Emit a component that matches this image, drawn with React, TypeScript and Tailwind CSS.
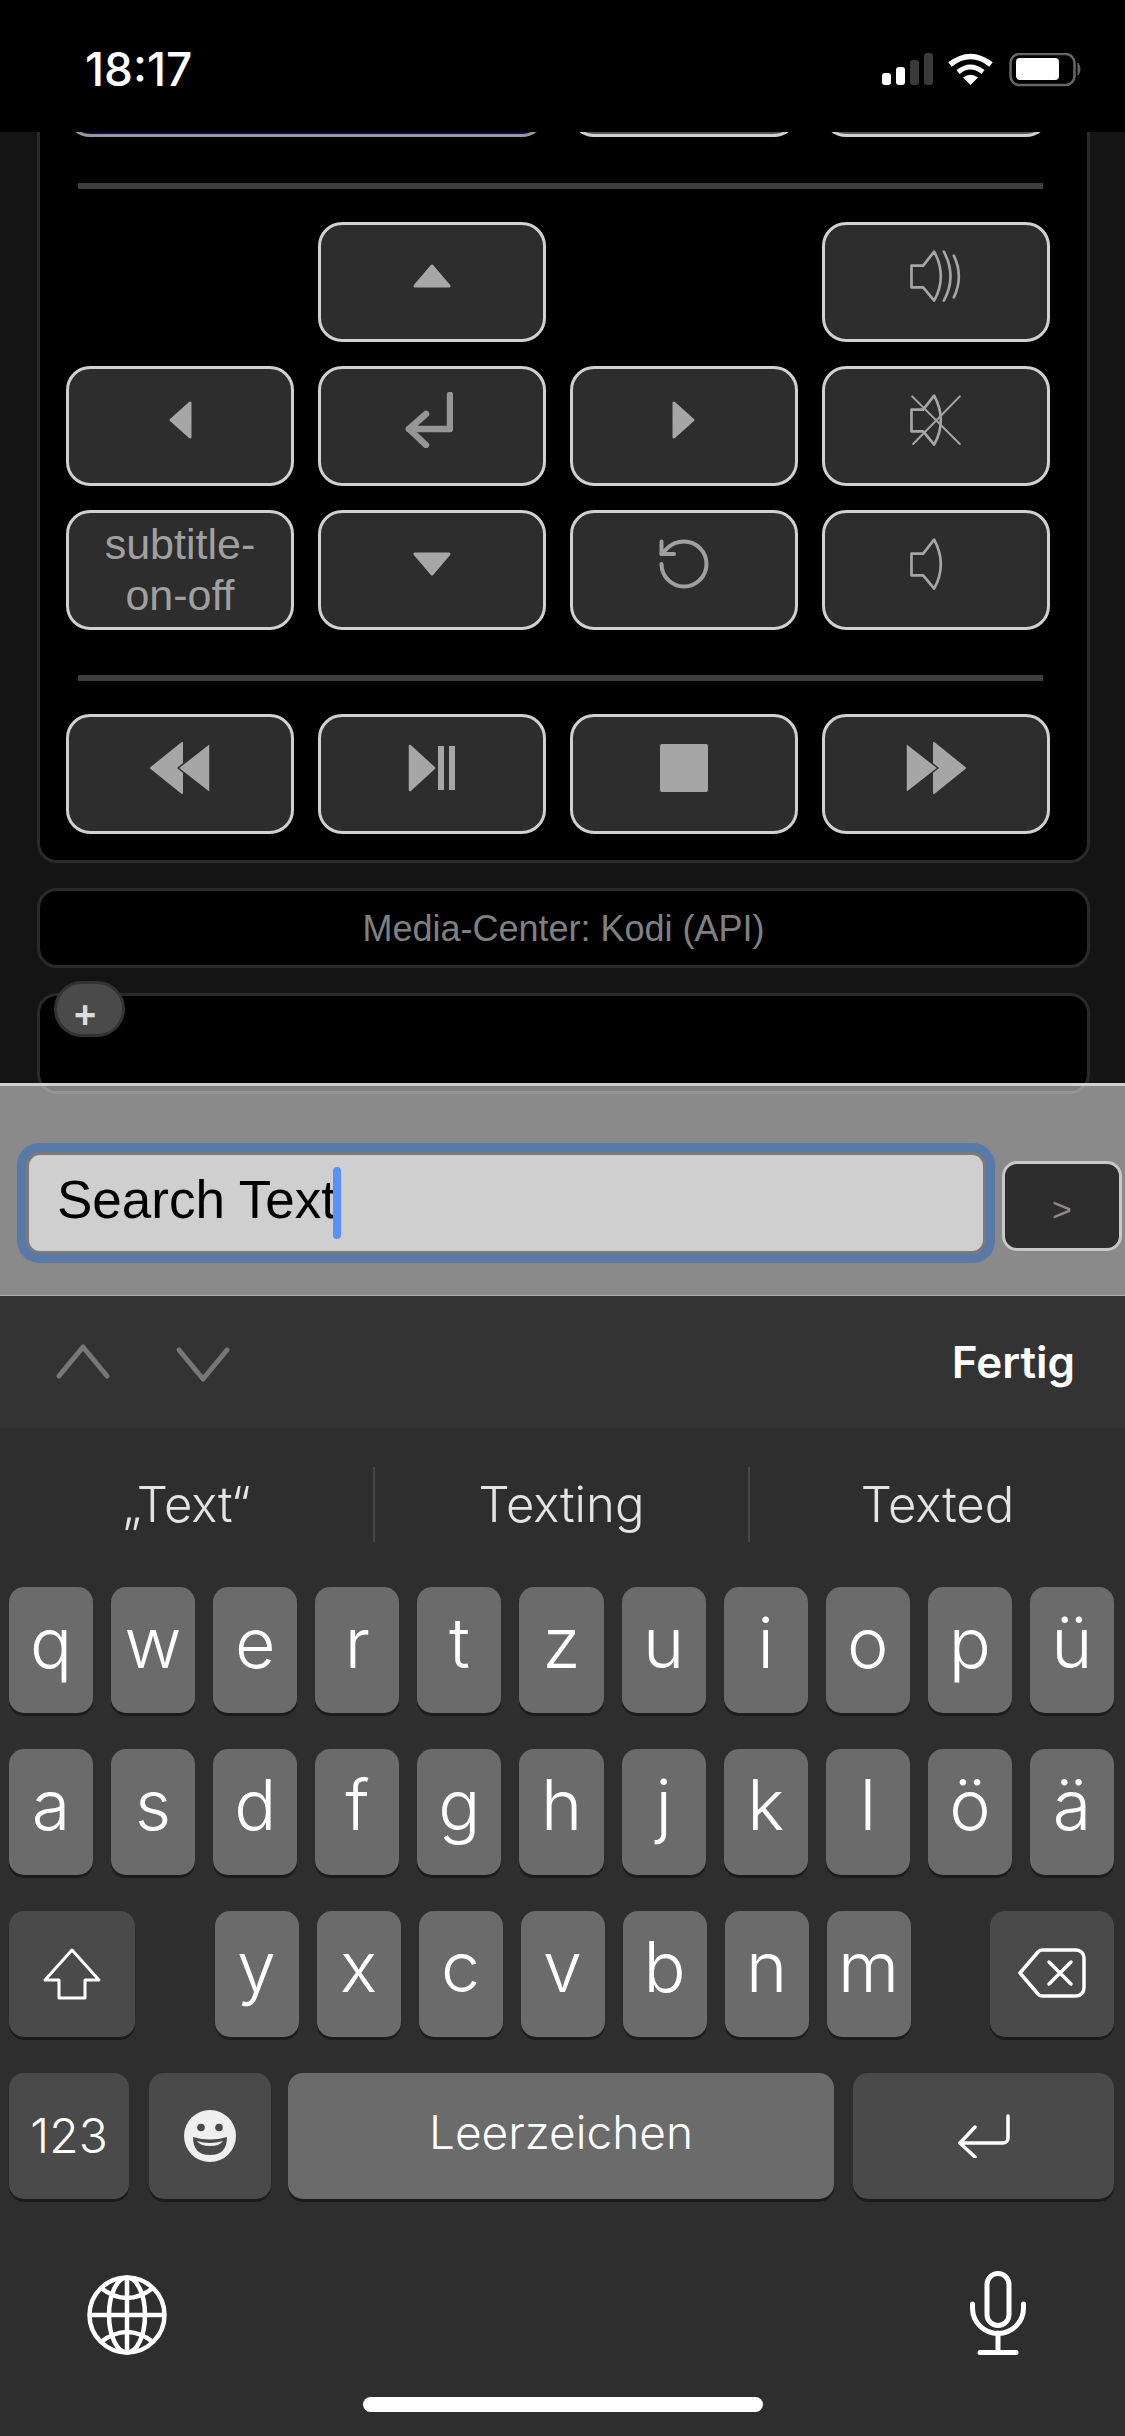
import React from 'react';
import { RotateCcw } from 'lucide-react';

const Tri = ({ w, h, points, className }: { w: number; h: number; points: string; className?: string }) => (
  <svg width={w} height={h} viewBox={`0 0 ${w} ${h}`} className={className}>
    <polygon points={points} fill="#a6a6a6" stroke="#a6a6a6" strokeWidth="3" strokeLinejoin="round" />
  </svg>
);

const Speaker = ({ waves, muted }: { waves?: boolean; muted?: boolean }) => (
  <svg width="57" height="55" viewBox="0 0 170 165" fill="none" stroke="#a6a6a6" strokeWidth="8" strokeLinejoin="round" strokeLinecap="round">
    <path d="M10 50 H45 L78 8 Q118 82 78 155 L45 115 H10 Z" />
    {waves && <path d="M107 8 Q147 82 107 155" />}
    {waves && <path d="M137 20 Q167 82 137 145" />}
    {muted && <path d="M12 10 L155 153 M155 10 L15 153" strokeWidth="6" />}
  </svg>
);

const RemoteButton = ({ children, flat }: { children?: React.ReactNode; flat?: boolean }) => (
  <div className={`h-[120px] rounded-[24px] border-[3px] border-[#d0d0d0] bg-[#2d2d2d] flex items-center justify-center ${flat ? '' : 'pb-[12px]'}`}>
    {children}
  </div>
);

const Divider = () => <div className="h-[6px] ml-[38px] w-[965px] bg-[#3f3f3f]" />;

const Key = ({ label, className }: { label: string; className?: string }) => (
  <div className={`h-[126px] rounded-[15px] bg-[#6b6b6b] shadow-[0_3px_0_#1c1c1c] flex items-center justify-center pb-[15px] text-[70px] font-light text-white ${className ?? ''}`}>
    {label}
  </div>
);

const DarkKey = ({ children, className }: { children: React.ReactNode; className: string }) => (
  <div className={`h-[126px] rounded-[15px] bg-[#4a4a4a] shadow-[0_3px_0_#1c1c1c] flex items-center justify-center text-white ${className}`}>
    {children}
  </div>
);

const StatusIcons = () => (
  <svg width="200" height="34" viewBox="0 0 200 34" fill="none">
    <rect x="0" y="20" width="9" height="12" rx="3" fill="#fff" />
    <rect x="14" y="14" width="9" height="18" rx="3" fill="#fff" />
    <rect x="28" y="7" width="9" height="25" rx="3" fill="#3a3a3a" />
    <rect x="42" y="0" width="9" height="32" rx="3" fill="#3a3a3a" />
    <path d="M68 11.5 Q88.5 -4.5 109 11.5" stroke="#fff" strokeWidth="5.5" />
    <path d="M76 19 Q88.5 9 101 19" stroke="#fff" strokeWidth="5" />
    <path d="M88.5 32 L81 24.5 Q88.5 19 96 24.5 Z" fill="#fff" />
    <rect x="128.5" y="1" width="64" height="31" rx="9" stroke="#666" strokeWidth="2.5" />
    <rect x="134" y="5" width="43" height="22" rx="4" fill="#fff" />
    <path d="M196 10 Q200 16.5 196 22 Z" fill="#666" stroke="#666" strokeWidth="1" />
  </svg>
);

const row1 = 'q w e r t z u i o p ü'.split(' ');
const row2 = 'a s d f g h j k l ö ä'.split(' ');
const row3 = 'y x c v b n m'.split(' ');

export default function App() {
  return (
    <div className="w-[1125px] h-[2436px] overflow-hidden bg-black flex flex-col font-['Inter',sans-serif]">
      {/* status bar */}
      <div className="h-[132px] shrink-0 bg-black flex justify-between pl-[85px] pr-[43px]">
        <span className="mt-[42px] h-[54px] leading-[54px] text-[46px] font-medium text-white">18:17</span>
        <div className="mt-[53px]">
          <StatusIcons />
        </div>
      </div>

      {/* web page */}
      <div className="relative h-[1164px] shrink-0 overflow-hidden bg-[#141414] pl-[37px] pr-[35px] font-['Liberation_Sans',sans-serif]">
        <div className="-mt-[140px] rounded-[20px] border-[3px] border-[#2a2a2a] bg-black pt-[22px] pb-[26px]">
          <div className="grid grid-cols-4 gap-x-[24px] w-[984px] ml-[26px]">
            <div className="col-span-2 h-[120px] rounded-[24px] border-[3px] border-[#999] bg-[#0a0a3c]" />
            <div className="h-[120px] rounded-[24px] border-[3px] border-[#d0d0d0] bg-[#555]" />
            <div className="h-[120px] rounded-[24px] border-[3px] border-[#d0d0d0] bg-[#555]" />
          </div>
          <div className="mt-[46px] mb-[33px]">
            <Divider />
          </div>
          <div className="grid grid-cols-4 gap-x-[24px] gap-y-[24px] w-[984px] ml-[26px]">
            <div />
            <RemoteButton>
              <Tri w={38} h={24} points="19,2 36,22 2,22" />
            </RemoteButton>
            <div />
            <RemoteButton>
              <Speaker waves />
            </RemoteButton>

            <RemoteButton>
              <Tri w={24} h={38} points="22,2 22,36 3,19" />
            </RemoteButton>
            <RemoteButton>
              <svg width="48" height="56" viewBox="0 0 48 56" fill="none" stroke="#969696" strokeWidth="6.5" strokeLinecap="round" strokeLinejoin="round" className="-ml-[6px]">
                <path d="M45 3 V37 H4" />
                <path d="M21 22 L4 37 L21 53" />
              </svg>
            </RemoteButton>
            <RemoteButton>
              <Tri w={24} h={38} points="2,2 2,36 21,19" />
            </RemoteButton>
            <RemoteButton>
              <Speaker muted />
            </RemoteButton>

            <RemoteButton flat>
              <span className="text-center text-[43px] leading-[51px] text-[#a0a0a0]">
                subtitle-
                <br />
                on-off
              </span>
            </RemoteButton>
            <RemoteButton>
              <Tri w={38} h={24} points="2,2 36,2 19,22" />
            </RemoteButton>
            <RemoteButton>
              <RotateCcw className="w-[60px] h-[60px] text-[#a0a0a0]" strokeWidth={1.6} />
            </RemoteButton>
            <RemoteButton>
              <Speaker />
            </RemoteButton>
          </div>
          <div className="mt-[45px] mb-[33px]">
            <Divider />
          </div>
          <div className="grid grid-cols-4 gap-x-[24px] w-[984px] ml-[26px]">
            <RemoteButton>
              <svg width="62" height="54" viewBox="0 0 62 54" fill="#a6a6a6" stroke="#a6a6a6" strokeWidth="2" strokeLinejoin="round">
                <polygon points="2,27 33,2 33,52" />
                <polygon points="29,27 61,2 61,52" stroke="#2a2a2a" strokeWidth="1.5" />
              </svg>
            </RemoteButton>
            <RemoteButton>
              <svg width="48" height="48" viewBox="0 0 48 48" fill="#a6a6a6">
                <polygon points="2,2 26,24 2,46" stroke="#a6a6a6" strokeWidth="2.5" strokeLinejoin="round" />
                <rect x="30" y="2" width="6" height="44" />
                <rect x="41" y="2" width="6" height="44" />
              </svg>
            </RemoteButton>
            <RemoteButton>
              <div className="w-[48px] h-[48px] rounded-[2px] bg-[#a6a6a6]" />
            </RemoteButton>
            <RemoteButton>
              <svg width="62" height="54" viewBox="0 0 62 54" fill="#a6a6a6" stroke="#a6a6a6" strokeWidth="2" strokeLinejoin="round">
                <polygon points="60,27 29,2 29,52" />
                <polygon points="33,27 1,2 1,52" stroke="#2a2a2a" strokeWidth="1.5" />
              </svg>
            </RemoteButton>
          </div>
        </div>

        <div className="mt-[25px] h-[80px] rounded-[20px] border-[3px] border-[#2a2a2a] bg-black flex items-center justify-center pt-[2px] text-[36px] text-[#808080]">
          Media-Center: Kodi (API)
        </div>

        <div className="relative mt-[25px] h-[101px] rounded-[20px] border-[3px] border-[#2a2a2a] bg-black">
          <div className="absolute left-[14px] -top-[15px] w-[71px] h-[56px] rounded-full border-[3px] border-[#333] bg-[#4a4a4a] flex items-center justify-center pt-[11px] pr-[9px] text-[38px] font-bold leading-none text-[#dcdcdc]">
            +
          </div>
        </div>

        {/* search bar floating above the keyboard */}
        <div className="absolute left-0 right-0 bottom-0 h-[213px] border-t-[3px] border-b border-t-[#cfcfcf] border-b-[#b0b0b0] bg-white/50 flex pt-[57px] pl-[17px]">
          <div className="w-[978px] h-[120px] rounded-[22px] bg-[#597aa8] p-[9px]">
            <div className="h-[102px] rounded-[14px] border-[3px] border-[#7a7a7a] bg-[#cfcfcf] flex items-center pl-[28px] text-[53px] text-black">
              <span className="pb-[6px]">Search Text</span>
              <div className="w-[8px] h-[72px] rounded-full bg-[#5b8ffa] -ml-[3px]" />
            </div>
          </div>
          <div className="w-[120px] h-[90px] ml-[7px] mt-[18px] rounded-[15px] border-[3px] border-[#c8c8c8] bg-[#2d2d2d] flex items-center justify-center pt-[6px] text-[34px] text-[#8a8a8a]">
            &gt;
          </div>
        </div>
      </div>

      {/* keyboard toolbar */}
      <div className="h-[132px] shrink-0 bg-[#333333] flex items-center pl-[51px] pr-[50px]">
        <svg width="64" height="38" viewBox="0 0 64 38" fill="none" stroke="#777" strokeWidth="5" strokeLinecap="round" strokeLinejoin="round">
          <path d="M8 33 L32 4 L56 33" />
        </svg>
        <svg width="64" height="38" viewBox="0 0 64 38" fill="none" stroke="#777" strokeWidth="5" strokeLinecap="round" strokeLinejoin="round" className="ml-[56px] mt-[3px]">
          <path d="M8 5 L32 34 L56 5" />
        </svg>
        <span className="ml-auto text-[44px] font-semibold text-white">Fertig</span>
      </div>

      {/* keyboard */}
      <div className="flex-1 bg-[#2e2e2e]">
        <div className="flex h-[75px] mt-[39px] text-[49px] font-light text-[#e4e4e4]">
          <div className="w-[373px] flex items-center justify-center">„Text“</div>
          <div className="w-[375px] border-l-2 border-[#484848] flex items-center justify-center">Texting</div>
          <div className="flex-1 border-l-2 border-[#484848] flex items-center justify-center">Texted</div>
        </div>

        <div className="mt-[45px] pl-[9px] pr-[11px] flex flex-col gap-[36px]">
          <div className="flex gap-[18px]">
            {row1.map(k => (
              <Key key={k} label={k} className="flex-1" />
            ))}
          </div>
          <div className="flex gap-[18px]">
            {row2.map(k => (
              <Key key={k} label={k} className="flex-1" />
            ))}
          </div>
          <div className="flex justify-between">
            <DarkKey className="w-[126px]">
              <svg width="60" height="54" viewBox="0 0 60 54" fill="none" stroke="#fff" strokeWidth="3" strokeLinejoin="round">
                <path d="M30 3 L57 33 H43 V51 H17 V33 H3 Z" />
              </svg>
            </DarkKey>
            <div className="flex gap-[18px]">
              {row3.map(k => (
                <Key key={k} label={k} className="w-[84px]" />
              ))}
            </div>
            <DarkKey className="w-[124px] pb-[2px]">
              <svg width="68" height="50" viewBox="0 0 68 50" fill="none" stroke="#fff" strokeWidth="3.5" strokeLinejoin="round" strokeLinecap="round">
                <path d="M24 2 H58 a8 8 0 0 1 8 8 V40 a8 8 0 0 1 -8 8 H24 a5 5 0 0 1 -4 -2 L2 25 L20 4 a5 5 0 0 1 4 -2 Z" />
                <path d="M31 14 L53 36 M53 14 L31 36" />
              </svg>
            </DarkKey>
          </div>
          <div className="flex">
            <DarkKey className="w-[120px] text-[48px] font-light">123</DarkKey>
            <DarkKey className="w-[122px] ml-[20px]">
              <svg width="52" height="52" viewBox="0 0 52 52">
                <circle cx="26" cy="26" r="26" fill="#efefef" />
                <circle cx="17" cy="17.5" r="3.8" fill="#4a4a4a" />
                <circle cx="35" cy="17.5" r="3.8" fill="#4a4a4a" />
                <path d="M9 27 Q26 32 43 27 Q43 45 26 45 Q9 45 9 27 Z" fill="#4a4a4a" />
                <path d="M13 31 Q26 35 39 31 Q36 36 26 36 Q16 36 13 31 Z" fill="#efefef" />
              </svg>
            </DarkKey>
            <Key label="Leerzeichen" className="w-[546px] ml-[17px] !text-[46px] !pb-[8px]" />
            <DarkKey className="flex-1 ml-[19px]">
              <svg width="54" height="44" viewBox="0 0 54 44" fill="none" stroke="#fff" strokeWidth="3.5" strokeLinecap="round" strokeLinejoin="round">
                <path d="M51 2 V24 a5 5 0 0 1 -5 5 H3" />
                <path d="M18 13 L3 29 L18 43" />
              </svg>
            </DarkKey>
          </div>
        </div>

        <div className="flex justify-between items-end mt-[72px] pl-[87px] pr-[99px]">
          <svg width="80" height="80" viewBox="0 0 80 80" fill="none" stroke="#fff" strokeWidth="4.5">
            <circle cx="40" cy="40" r="37.5" />
            <ellipse cx="40" cy="40" rx="18" ry="37.5" />
            <path d="M40 2 V78 M2 40 H78" />
            <path d="M14 13 Q40 33 66 13 M14 67 Q40 47 66 67" />
          </svg>
          <svg width="56" height="84" viewBox="0 0 56 84" fill="none" stroke="#fff" strokeWidth="5" strokeLinecap="round">
            <rect x="17" y="2.5" width="22" height="52" rx="11" />
            <path d="M2.5 33 V37 a25.5 25.5 0 0 0 51 0 V33" />
            <path d="M28 62 V81 M10 81.5 H46" />
          </svg>
        </div>

        <div className="mt-[42px] mx-auto w-[400px] h-[15px] rounded-full bg-white" />
      </div>
    </div>
  );
}
